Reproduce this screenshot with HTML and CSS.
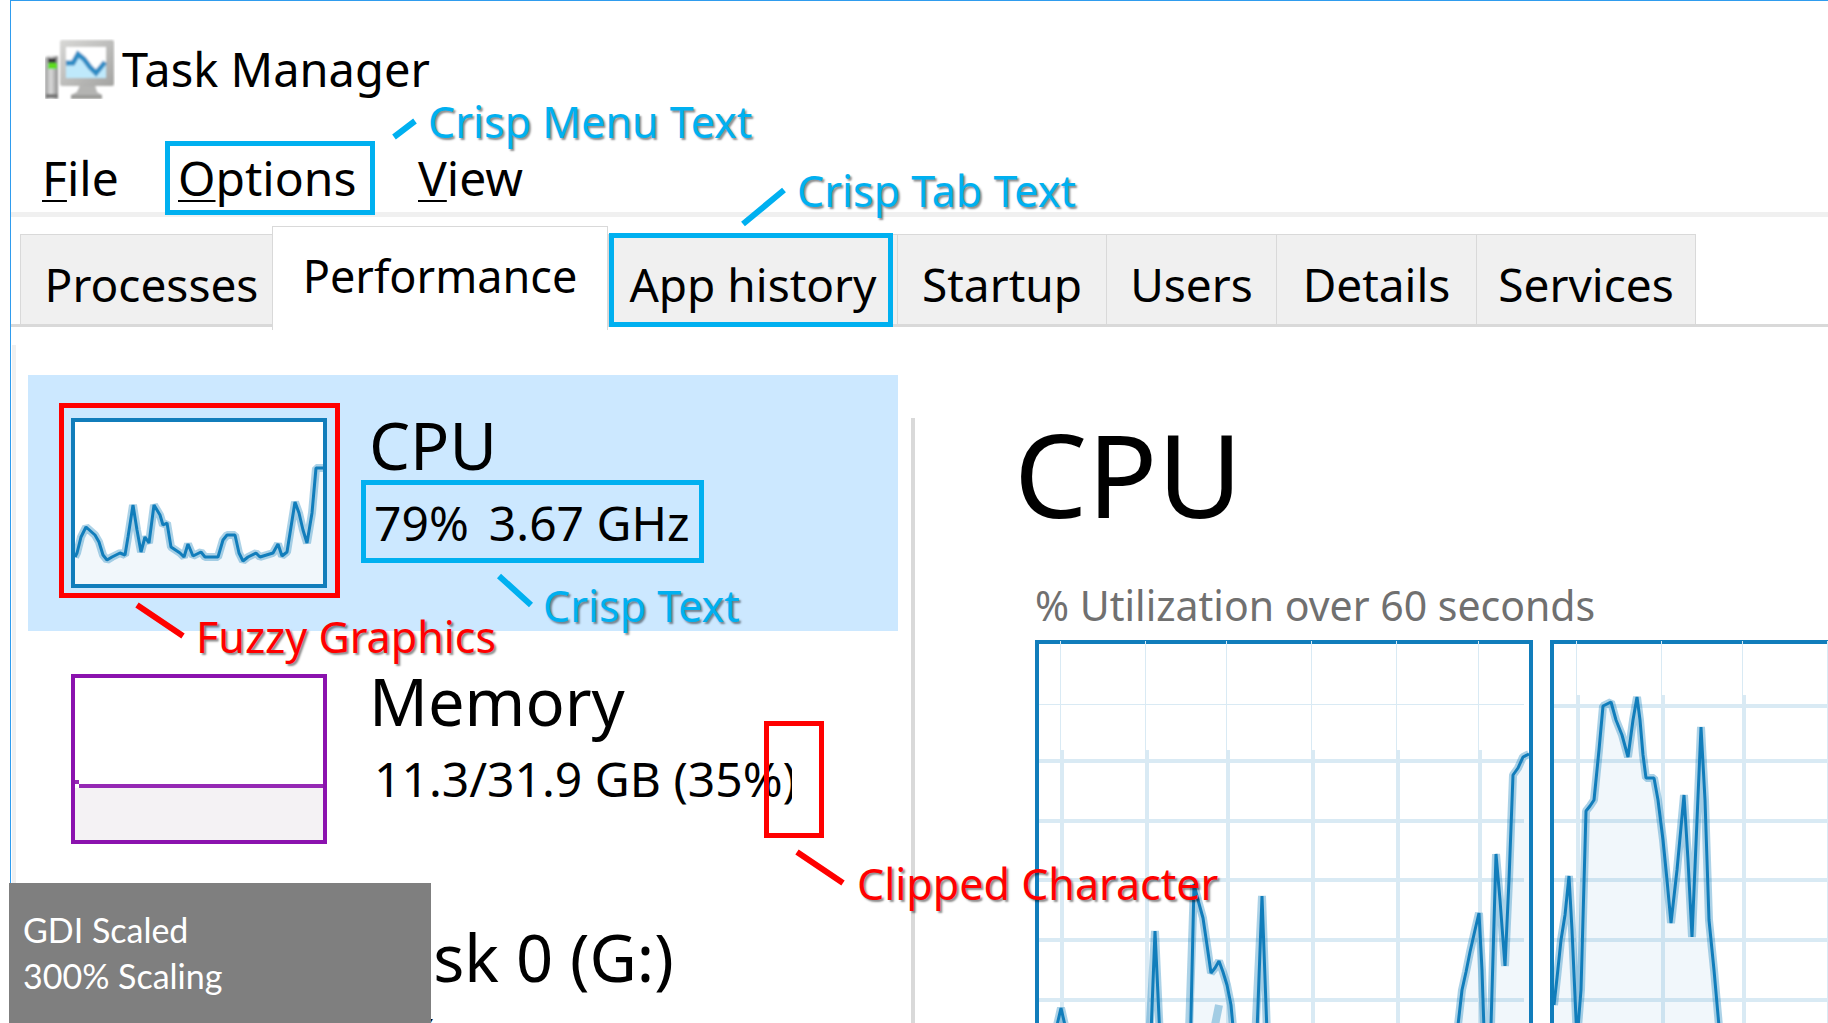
FILE: index.html
```html
<!DOCTYPE html>
<html lang="en">
<head>
<meta charset="utf-8">
<title>Task Manager</title>
<link rel="stylesheet" href="styles.css">
</head>
<body>
<div class="window">
  <header class="titlebar">
    <svg class="app-icon" viewBox="0 0 70 60" aria-hidden="true">
      <defs>
        <linearGradient id="metal" x1="0" y1="0" x2="1" y2="1">
          <stop offset="0" stop-color="#d8d8d6"/><stop offset="1" stop-color="#a3a3a1"/>
        </linearGradient>
        <linearGradient id="tower" x1="0" y1="0" x2="1" y2="0">
          <stop offset="0" stop-color="#999"/><stop offset=".45" stop-color="#dcdcdc"/><stop offset="1" stop-color="#8c8c8c"/>
        </linearGradient>
        <filter id="soft"><feGaussianBlur stdDeviation="1"/></filter>
      </defs>
      <g filter="url(#soft)">
        <path d="M0 19l3-2h10v43H0z" fill="url(#tower)"/>
        <rect x="3" y="19" width="8" height="5" fill="#3a3a3a"/>
        <rect x="3" y="24" width="9" height="6" rx="1" fill="#5fdc1c"/>
        <rect x="1" y="55" width="12" height="4" fill="#777"/>
        <path d="M35 46h15l2 7 5 3v4H26v-4l6-3z" fill="#b4b4b2"/>
        <path d="M26 56h31v4H26z" fill="#9b9b99"/>
        <rect x="15" y="1" width="54" height="46" rx="2" fill="url(#metal)"/>
        <rect x="21" y="8" width="40" height="31" fill="#fff"/>
        <path d="M21 24h7l5-9 6 5 6 8 6 6 5-6 5-4v15H21z" fill="#bfe9fb"/>
        <path d="M21 24h7l5-9 6 5 6 8 6 6 5-6 4-5" fill="none" stroke="#2f8cc4" stroke-width="5"/>
      </g>
    </svg>
    <span class="title">Task Manager</span>
  </header>

  <nav class="menubar">
    <button class="menu"><u>F</u>ile</button>
    <button class="menu"><u>O</u>ptions</button>
    <button class="menu"><u>V</u>iew</button>
  </nav>

  <div class="tabs" role="tablist">
    <button class="tab tab-first" role="tab">Processes</button>
    <button class="tab tab-active" role="tab" aria-selected="true">Performance</button>
    <button class="tab" role="tab">App history</button>
    <button class="tab" role="tab">Startup</button>
    <button class="tab" role="tab">Users</button>
    <button class="tab" role="tab">Details</button>
    <button class="tab tab-last" role="tab">Services</button>
  </div>

  <div class="body">
    <aside class="sidebar">
      <button class="item item-selected">
        <svg class="thumb thumb-cpu" viewBox="71 418 256 170" aria-hidden="true">
          <rect class="frame" x="73" y="420" width="252" height="166"/>
          <path class="area" d="M75 584V557L77 553 81 537 86 527 95 535 99 542 103 555 107 560 112 557 120 553 125 555 128 537 133 505 137 530 141 552 145 537 149 543 154 505 160 515 163 525 167 523 171 547 180 553 184 557 188 544 193 556 201 552 205 557 218 557 223 540 227 535 235 535 239 553 243 561 248 557 256 553 260 557 273 553 278 544 282 556 287 552 291 527 295 502 299 513 303 530 307 543 312 513 316 468 323 468V584z"/>
          <g class="trace">
            <path class="halo" d="M75 557L77 553 81 537 86 527 95 535 99 542 103 555 107 560 112 557 120 553 125 555 128 537 133 505 137 530 141 552 145 537 149 543 154 505 160 515 163 525 167 523 171 547 180 553 184 557 188 544 193 556 201 552 205 557 218 557 223 540 227 535 235 535 239 553 243 561 248 557 256 553 260 557 273 553 278 544 282 556 287 552 291 527 295 502 299 513 303 530 307 543 312 513 316 468 323 468"/>
            <path d="M75 557L77 553 81 537 86 527 95 535 99 542 103 555 107 560 112 557 120 553 125 555 128 537 133 505 137 530 141 552 145 537 149 543 154 505 160 515 163 525 167 523 171 547 180 553 184 557 188 544 193 556 201 552 205 557 218 557 223 540 227 535 235 535 239 553 243 561 248 557 256 553 260 557 273 553 278 544 282 556 287 552 291 527 295 502 299 513 303 530 307 543 312 513 316 468 323 468"/>
          </g>
        </svg>
        <span class="info">
          <span class="name">CPU</span>
          <span class="stat"><span>79%</span><span>3.67 GHz</span></span>
        </span>
      </button>
      <button class="item">
        <svg class="thumb thumb-memory" viewBox="0 0 256 170" aria-hidden="true">
          <rect class="frame" x="2" y="2" width="252" height="166"/>
          <rect class="area" x="4" y="114" width="248" height="52"/>
          <path class="level" d="M4 108H8M8 112H252"/>
        </svg>
        <span class="info">
          <span class="name">Memory</span>
          <span class="stat">11.3/31.9 GB (35%)</span>
        </span>
      </button>
      <button class="item">
        <svg class="thumb thumb-disk" viewBox="0 0 256 170" aria-hidden="true">
          <rect class="frame" x="2" y="2" width="252" height="166"/>
        </svg>
        <span class="info">
          <span class="name">Disk 0 (G:)</span>
          <span class="stat">0%</span>
        </span>
      </button>
    </aside>

    <main class="detail">
      <h1 class="heading">CPU</h1>
      <p class="subtitle">% Utilization over 60 seconds</p>
      <div class="graphs">
        <svg class="graph" viewBox="1035 640 498 480" aria-hidden="true">
          <rect class="frame" x="1037" y="642" width="494" height="476"/>
          <path class="grid-thin" d="M1060.500 641V750M1145.500 641V750M1226.500 641V750M1311.500 641V750M1396.500 641V750M1478.500 641V750M1039 704.500H1524"/>
          <path class="grid-thick" d="M1062 750V1116M1147 750V1116M1228 750V1116M1313 750V1116M1398 750V1116M1480 750V1116M1039 761H1524M1039 821H1524M1039 880H1524M1039 940H1524M1039 1000H1524"/>
          <path class="area" d="M1049 1060L1061 1008 1073 1060zM1146 1060L1155 931 1165 1060zM1186 1060L1194 884 1198 900 1203 918 1207 945 1211 973 1215 968 1219 961 1223 972 1227 985 1231 1005 1236 1060zM1252 1060L1262 896 1270 1060zM1454 1060L1462 990 1466 972 1470 952 1475 930 1479 913 1482 970 1485 1060zM1490 1060L1496 854 1500 900 1505 966 1509 880 1513 775 1518 768 1523 757 1529 754V1060z"/>
          <g class="trace">
            <path class="halo" d="M1049 1060L1061 1008 1073 1060M1148 1060L1155 931 1161 1060M1188 1060L1194 884 1198 900 1203 918 1207 945 1211 973 1215 968 1219 961 1223 972 1227 985 1231 1005 1236 1060M1254 1060L1262 896 1268 1060M1454 1060L1462 990 1466 972 1470 952 1475 930 1479 913 1482 970 1485 1060M1490 1060L1496 854 1500 900 1505 966 1509 880 1513 775 1518 768 1523 757 1529 754M1214 1030L1219 1005"/>
            <path d="M1049 1060L1061 1008 1073 1060M1150 1060L1155 931 1161 1060M1190 1060L1194 884 1198 900 1203 918 1207 945 1211 973 1215 968 1219 961 1223 972 1227 985 1231 1005 1236 1060M1256 1060L1262 896 1268 1060M1454 1060L1462 990 1466 972 1470 952 1475 930 1479 913 1482 970 1485 1060M1490 1060L1496 854 1500 900 1505 966 1509 880 1513 775 1518 768 1523 757 1529 754"/>
          </g>
        </svg>
        <svg class="graph" viewBox="1550 640 498 480" aria-hidden="true">
          <rect class="frame" x="1552" y="642" width="494" height="476"/>
          <path class="grid-thin" d="M1576.500 641V695M1661.500 641V695M1742.500 641V695M1827.500 641V695"/>
          <path class="grid-thick" d="M1578 695V1116M1663 695V1116M1744 695V1116M1829 695V1116M1554 706H2039M1554 761H2039M1554 821H2039M1554 880H2039M1554 940H2039M1554 1000H2039"/>
          <path class="area" d="M1554 1060V1005L1557 978 1561 940 1565 915 1569 876 1572 930 1577 1040 1581 990 1586 811 1590 806 1594 800 1599 750 1603 706 1611 702 1616 720 1622 735 1628 757 1633 720 1637 697 1640 720 1643 755 1646 778 1654 778 1658 800 1663 840 1667 880 1671 923 1677 870 1684 795 1688 860 1692 937 1697 820 1701 727 1705 800 1709 920 1714 970 1722 1060z"/>
          <g class="trace">
            <path class="halo" d="M1554 1005L1557 978 1561 940 1565 915 1569 876 1572 930 1577 1040 1581 990 1586 811 1590 806 1594 800 1599 750 1603 706 1611 702 1616 720 1622 735 1628 757 1633 720 1637 697 1640 720 1643 755 1646 778 1654 778 1658 800 1663 840 1667 880 1671 923 1677 870 1684 795 1688 860 1692 937 1697 820 1701 727 1705 800 1709 920 1714 970 1722 1060"/>
            <path d="M1554 1005L1557 978 1561 940 1565 915 1569 876 1572 930 1577 1040 1581 990 1586 811 1590 806 1594 800 1599 750 1603 706 1611 702 1616 720 1622 735 1628 757 1633 720 1637 697 1640 720 1643 755 1646 778 1654 778 1658 800 1663 840 1667 880 1671 923 1677 870 1684 795 1688 860 1692 937 1697 820 1701 727 1705 800 1709 920 1714 970 1722 1060"/>
          </g>
        </svg>
      </div>
    </main>
  </div>
</div>

<div class="notes">
  <svg class="marks" aria-hidden="true">
    <g class="mark-good">
      <rect x="167.500" y="143.500" width="205" height="69"/>
      <rect x="611.500" y="235.500" width="279" height="89"/>
      <rect x="363.500" y="482.500" width="338" height="78"/>
      <path d="M394 137L415 121M743 224L784 190M499 576L531 605"/>
    </g>
    <g class="mark-bad">
      <rect x="61.500" y="405.500" width="276" height="190"/>
      <rect x="766.500" y="723.500" width="55" height="112"/>
      <path d="M137 605L183 636M797 852L843 883"/>
    </g>
  </svg>
  <span class="note good note-menu">Crisp Menu Text</span>
  <span class="note good note-tab">Crisp Tab Text</span>
  <span class="note good note-text">Crisp Text</span>
  <span class="note bad note-graphics">Fuzzy Graphics</span>
  <span class="note bad note-clipped">Clipped Character</span>
  <p class="caption">GDI Scaled<br>300% Scaling</p>
</div>
</body>
</html>
```
FILE: styles.css
```css
* { box-sizing: border-box; }

body {
  margin: 0;
  height: 100vh;
  overflow: hidden;
  position: relative;
  background: #fff;
  color: #000;
  font-family: "Noto Sans", "Open Sans", sans-serif;
}

button {
  margin: 0;
  padding: 0;
  border: 0;
  background: none;
  color: inherit;
  font: inherit;
  text-align: left;
}

.window {
  height: 100vh;
  margin-left: 10px;
  border: solid #2f9cee;
  border-width: 1px 0 0 1px;
  overflow: hidden;
}

/* title and menu */
.titlebar {
  display: flex;
  align-items: flex-start;
  gap: 7px;
  padding: 36px 0 45px 34px;
}
.app-icon { width: 70px; height: 60px; margin-top: 2px; }
.title { font-size: 47px; line-height: 64px; }

.menubar {
  display: grid;
  grid-template-columns: 136px 240px auto;
  padding: 0 0 2px 31px;
  border-bottom: 5px solid #f0f0f0;
  font-size: 48px;
  line-height: 64px;
}
.menu u {
  text-decoration-thickness: 2px;
  text-underline-offset: 4px;
  text-decoration-skip-ink: none;
}

/* tabs */
.tabs {
  display: grid;
  grid-template-columns: 252px 336px 289px 209px 170px 200px 220px;
  align-items: end;
  height: 110px;
  padding-left: 9px;
  border-bottom: 3px solid #d9d9d9;
  font-size: 46px;
  line-height: 64px;
}
.tab {
  height: 90px;
  padding-bottom: 8px;
  padding-top: 17px;
  border: solid #d9d9d9;
  border-width: 1px 0 0 1px;
  background: #f0f0f0;
  text-align: center;
}
.tab-first { padding-left: 10px; }
.tab-last { border-right-width: 1px; }
.tab-active {
  position: relative;
  height: 104px;
  margin-bottom: -6px;
  padding-bottom: 22px;
  border-right-width: 1px;
  background: #fff;
  font-size: 45px;
}

/* resource list */
.body {
  display: flex;
  padding: 18px 0 0 1px;
}
.sidebar {
  flex: none;
  padding: 30px 13px 0 12px;
  border-left: 4px solid #f0f0f0;
}
.item {
  display: flex;
  align-items: flex-start;
  gap: 42px;
  width: 870px;
  height: 256px;
  padding-left: 43px;
}
.item-selected { background: #cce8ff; }
.thumb { flex: none; width: 256px; height: 170px; margin-top: 43px; }
.info { display: block; padding-top: 27px; }
.name { display: block; font-size: 65px; line-height: 86px; }
.stat {
  display: flex;
  gap: 20px;
  width: 418px;
  margin-left: 5px;
  overflow: hidden;
  font-size: 48px;
  line-height: 70px;
  white-space: nowrap;
}

.frame { fill: #fff; stroke: #117dbb; stroke-width: 4; }
.area { fill: #117dbb; fill-opacity: .06; }
.trace { fill: none; stroke: #117dbb; stroke-width: 3; stroke-linejoin: bevel; }
.halo { stroke-width: 8; stroke-opacity: .35; }
.thumb-memory .frame { stroke: #8b12ae; }
.thumb-memory .area { fill: #f4f2f4; fill-opacity: 1; }
.thumb-disk .frame { stroke: #4da60c; }
.level { stroke: #9528b4; stroke-width: 4; }

/* detail pane */
.detail {
  flex: 1;
  min-width: 0;
  margin-top: 73px;
  padding-left: 99px;
  border-left: 4px solid #d9d9d9;
}
.heading {
  margin: 0;
  font-size: 116px;
  font-weight: 400;
  line-height: 110px;
}
.subtitle {
  margin: 49px 0 7px 21px;
  color: #707070;
  font-size: 41px;
  line-height: 56px;
  white-space: nowrap;
}
.graphs {
  display: flex;
  gap: 17px;
  margin-left: 21px;
}
.graph { flex: none; width: 498px; height: 480px; }
.grid-thin { stroke: #d9eaf4; stroke-width: 1; }
.grid-thick { stroke: #d9eaf4; stroke-width: 4; }

/* annotations laid over the window */
.marks {
  position: absolute;
  inset: 0;
  width: 100%;
  height: 100%;
  fill: none;
  stroke-width: 5;
}
.marks path { stroke-width: 6; }
.mark-good { stroke: #00b0f0; }
.mark-bad { stroke: #f00; }
.note {
  position: absolute;
  font-size: 43px;
  line-height: 60px;
  white-space: nowrap;
  text-shadow: 2px 2px 2px rgba(0, 0, 0, .45);
}
.good { color: #00b0f0; }
.bad { color: #f00; }
.note-menu { left: 428px; top: 92px; }
.note-tab { left: 797px; top: 161px; }
.note-text { left: 543px; top: 576px; }
.note-graphics { left: 196px; top: 607px; }
.note-clipped { left: 857px; top: 854px; }
.caption {
  position: absolute;
  left: 9px;
  bottom: 0;
  width: 422px;
  height: 140px;
  margin: 0;
  padding: 24px 14px;
  background: #7f7f7f;
  color: #fff;
  font-family: Lato, "Open Sans", sans-serif;
  font-size: 34px;
  line-height: 46px;
}
```
